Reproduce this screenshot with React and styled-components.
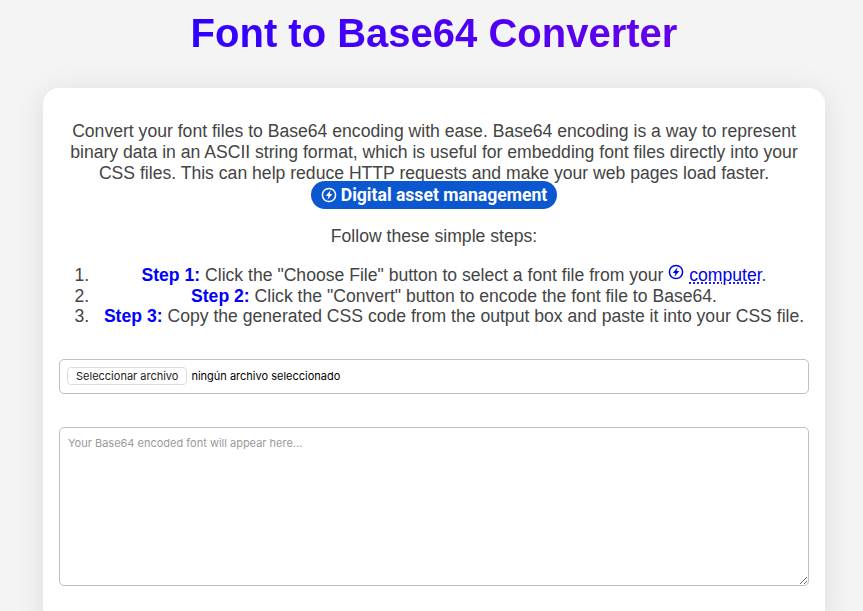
import React from "react";
import styled, { createGlobalStyle } from "styled-components";

const Global = createGlobalStyle`
  html, body { margin: 0; padding: 0; height: 100%; overflow: hidden; background: #f4f4f4; }
  body { font-family: "Liberation Sans", Arial, sans-serif; color: #444; }
  * { box-sizing: border-box; }
`;
const Page = styled.div`
  display: flex;
  flex-direction: column;
  align-items: center;
  padding: 0 38px 0 43px;
`;
const Title = styled.h1`
  margin: 12px 0 0;
  height: 76px;
  font-size: 40px;
  line-height: 42px;
  font-weight: 700;
  width: fit-content;
  background: linear-gradient(90deg, #3000ff, #6400ea);
  -webkit-background-clip: text;
  background-clip: text;
  color: transparent;
`;
const Card = styled.main`
  width: 782px;
  background: #fff;
  border-radius: 16px;
  padding: 33px 16px 40px;
  box-shadow: 0 4px 30px rgba(0, 0, 0, 0.1);
`;
const Intro = styled.p`
  margin: 0 0 17px;
  font-size: 17.6px;
  line-height: 21px;
  text-align: center;
  color: #444;
`;
const Pill = styled.a`
  display: inline-flex;
  align-items: center;
  gap: 4px;
  height: 28px;
  margin-top: -3px;
  padding: 0 10px;
  border-radius: 14px;
  background: #0b57d0;
  color: #fff;
  font-family: Roboto, sans-serif;
  font-weight: 700;
  font-size: 17.6px;
  vertical-align: top;
`;
const Lead = styled.p`
  margin: 0 0 17px;
  font-size: 17.6px;
  line-height: 21px;
  text-align: center;
`;
const Steps = styled.ol`
  margin: 0 0 32px;
  padding: 0 0 0 40px;
  font-size: 17.6px;
  line-height: 20.5px;
`;
const Step = styled.li`
  text-align: center;
  &::marker {
    content: counter(list-item) ".\\00a0\\00a0";
  }
`;
const StepLabel = styled.strong`
  color: #0000ff;
`;
const Link = styled.a`
  color: #0000ee;
  text-decoration: underline dotted;
  text-underline-offset: 2px;
`;
const InlineIcon = styled.svg`
  display: inline-block;
  vertical-align: ${(p) => p.$lift || "0"};
  flex: none;
`;
const FileRow = styled.div`
  display: flex;
  align-items: center;
  height: 35px;
  padding: 0 7px;
  border: 1px solid #c0c0c0;
  border-radius: 5px;
  margin-bottom: 33px;
  font-family: Inter, sans-serif;
`;
const FileButton = styled.span`
  display: inline-flex;
  align-items: center;
  height: 18px;
  padding: 0 8px;
  border: 1px solid #dcdcdc;
  border-radius: 4px;
  background: #fff;
  color: #222;
  font-size: 11px;
  margin-right: 4px;
`;
const FileName = styled.span`
  font-size: 11px;
  color: #000;
`;
const Output = styled.textarea`
  display: block;
  width: 100%;
  height: 159px;
  padding: 8px;
  border: 1px solid #c0c0c0;
  border-radius: 5px;
  font-family: Inter, sans-serif;
  font-size: 11px;
  outline: none;
  &::placeholder { color: #9a9a9a; opacity: 1; }
`;

const Bolt = ({ size = 16, lift }) => (
  <InlineIcon $lift={lift} width={size} height={size} viewBox="0 0 16 16" fill="none">
    <circle cx="8" cy="8" r="6.6" stroke="currentColor" strokeWidth="1.5" />
    <path d="M9.6 3.2 4.7 9h2.7l-.9 3.8L11.4 7H8.6z" fill="currentColor" />
  </InlineIcon>
);
const BlueIcon = styled.span`
  color: #0000ee;
`;

export default function App() {
  return (
    <>
      <Global />
      <Page>
        <Title>Font to Base64 Converter</Title>
        <Card>
          <Intro>
            Convert your font files to Base64 encoding with ease. Base64 encoding is a way to represent binary data in an ASCII string format, which is useful for embedding font files directly into your CSS files. This can help reduce HTTP requests and make your web pages load faster.
            <br />
            <Pill><Bolt /> Digital asset management</Pill>
          </Intro>
          <Lead>Follow these simple steps:</Lead>
          <Steps>
            <Step><StepLabel>Step 1:</StepLabel> Click the "Choose File" button to select a font file from your <BlueIcon><Bolt lift="1px" /></BlueIcon> <Link>computer</Link>.</Step>
            <Step><StepLabel>Step 2:</StepLabel> Click the "Convert" button to encode the font file to Base64.</Step>
            <Step><StepLabel>Step 3:</StepLabel> Copy the generated CSS code from the output box and paste it into your CSS file.</Step>
          </Steps>
          <FileRow>
            <FileButton>Seleccionar archivo</FileButton>
            <FileName>ningún archivo seleccionado</FileName>
          </FileRow>
          <Output placeholder="Your Base64 encoded font will appear here..." />
        </Card>
      </Page>
    </>
  );
}
